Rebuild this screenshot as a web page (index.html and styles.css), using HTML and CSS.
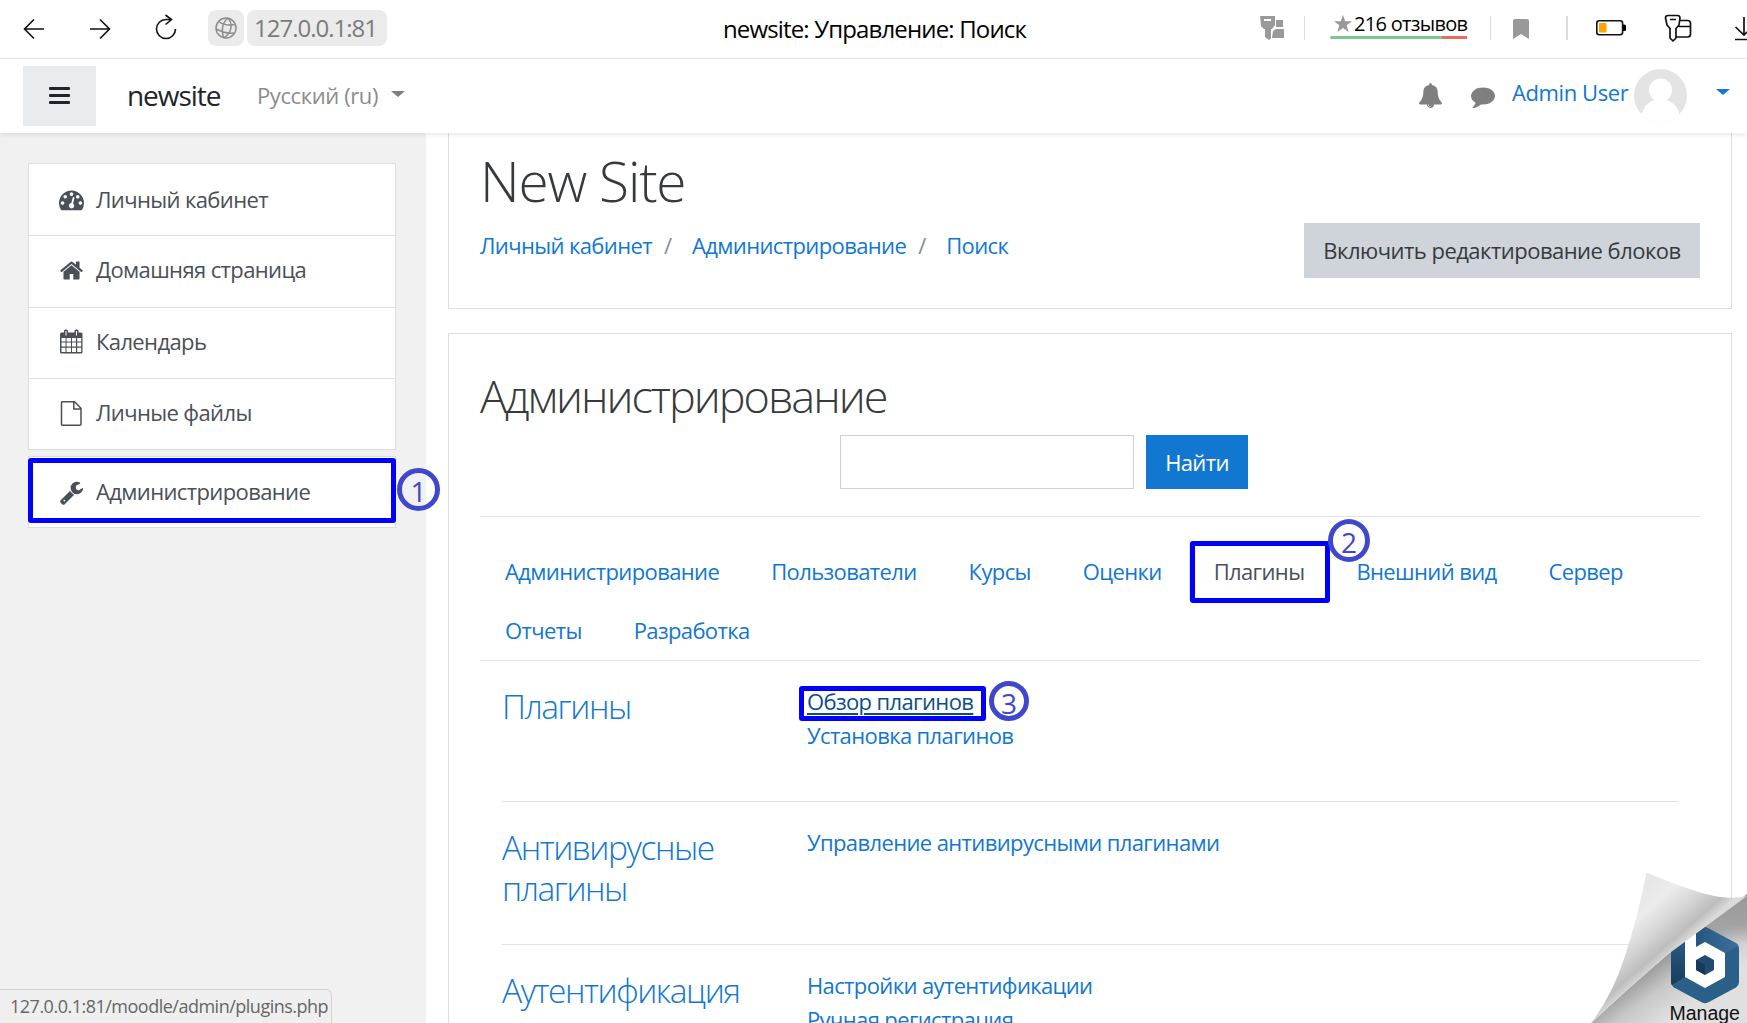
FILE: index.html
```html
<!DOCTYPE html>
<html lang="ru">
<head>
<meta charset="utf-8">
<title>newsite: Управление: Поиск</title>
<link rel="stylesheet" href="styles.css">
</head>
<body>
<header class="browser">
  <div class="browser-nav">
    <svg class="ico-back" width="22" height="22" viewBox="0 0 22 22"><path d="M21 11H1.500M11 1.500L1.500 11l9.500 9.500"/></svg>
    <svg class="ico-fwd" width="22" height="22" viewBox="0 0 22 22"><path d="M1 11h19.500M11 1.500l9.500 9.500-9.500 9.500"/></svg>
    <svg class="ico-reload" width="22" height="26" viewBox="0 0 22 26"><path d="M20.500 15a9.500 9.500 0 1 1-9.500-9.500h5.500M10.500 1l6 4.500-6 5"/></svg>
    <div class="site-ico"><svg width="24" height="24" viewBox="0 0 24 24"><circle cx="12" cy="12" r="10"/><path d="M14 2.200c-6 4-7 14-4 19.600M14 2.200c5 5 4 15-4 19.600M4.500 5.500c5 3.500 11 4.200 16 3M2.500 13c5 3 12 4.500 17.500 4"/></svg></div>
    <div class="url">127.0.0.1:81</div>
  </div>
  <div class="page-title">newsite: Управление: Поиск</div>
  <div class="browser-tools">
    <svg class="t-key" width="25" height="26" viewBox="0 0 25 26"><path fill="#999" fill-rule="evenodd" d="M1 1h15v9l-3 4h-1v9l-2 2-4-3v-8H5l-3-3zM5 4v2h7V4zM17 5h7v7h-7zM14 16l3-2h8v9H13z"/></svg>
    <i class="sep"></i>
    <div class="reviews">
      <div class="reviews-text"><svg width="18" height="18" viewBox="0 0 18 18"><path fill="#999" d="M9 0l2.200 6.300H18l-5.300 4 2 6.700L9 13l-5.700 4 2-6.700L0 6.300h6.800z"/></svg><span>216 отзывов</span></div>
      <div class="reviews-bar"></div>
    </div>
    <i class="sep sep2"></i>
    <svg class="t-mark" width="16" height="20" viewBox="0 0 16 20"><path fill="#999" d="M2 0h12q2 0 2 2v18l-8-5-8 5V2q0-2 2-2z"/></svg>
    <i class="sep sep3"></i>
    <svg class="t-bat" width="31" height="16" viewBox="0 0 31 16"><rect x=".8" y=".8" width="25.800" height="14" rx="2.500" fill="none" stroke="#111" stroke-width="1.600"/><rect x="3" y="3" width="7.500" height="9.500" rx="1" fill="#ffa400"/><path d="M27 4.500h1.500q1.500 0 1.500 1.500v3.500q0 1.500-1.500 1.500H27z"/></svg>
    <svg class="t-pass" width="28" height="28" viewBox="0 0 28 28"><g fill="none" stroke="#111" stroke-width="1.700" stroke-linejoin="round"><path d="M4 1.500h9.500q2.500 0 2.500 2.500l-1 7-3 3.500v9.500l-3 3-3-3V14.500L3 11 1.500 4Q1.500 1.500 4 1.500zM6 5.500h6M16 6.500h7.500q3 0 3 3V20q0 3-3 3H12M15 12.500h11"/></g></svg>
    <svg class="t-down" width="24" height="24" viewBox="0 0 24 24"><path d="M10 0v18M1.500 10l8.500 8 8.500-8M1 22.500h22" fill="none" stroke="#111" stroke-width="1.700"/></svg>
  </div>
</header>

<nav class="topnav">
  <button class="burger"><i></i><i></i><i></i></button>
  <a class="brand">newsite</a>
  <a class="lang">Русский (ru)<i class="caret"></i></a>
  <div class="user">
    <svg class="bell" width="25" height="25" viewBox="0 0 1792 1792"><path d="M912 1696q0-16-16-16-59 0-101.500-42.500t-42.500-101.500q0-16-16-16t-16 16q0 73 51.500 124.500t124.500 51.500q16 0 16-16zm816-288q0 52-38 90t-90 38h-448q0 106-75 181t-181 75-181-75-75-181h-448q-52 0-90-38t-38-90q50-42 91-88t85-119.500 74.500-158.500 50-206 19.500-260q0-152 117-282.500t307-158.500q-8-19-8-39 0-40 28-68t68-28 68 28 28 68q0 20-8 39 190 28 307 158.500t117 282.500q0 139 19.500 260t50 206 74.500 158.500 85 119.500 91 88z"/></svg>
    <svg class="chat" width="24" height="24" viewBox="0 0 1792 1792"><path d="M1792 896q0 174-120 321.500t-326 233-450 85.500q-70 0-145-8-198 175-460 242-49 14-114 22-17 2-30.500-9t-17.500-29v-1q-3-4-.5-12t2-10 4.500-9.500l6-9 7-8.500 8-9q7-8 31-34.500t34.500-38 31-39.500 32.500-51 27-59 26-76q-157-89-247.500-220t-90.500-281q0-130 71-248.500t191-204.500 286-136.500 348-50.500q244 0 450 85.500t326 233 120 321.500z"/></svg>
    <a class="user-name">Admin User</a>
    <svg class="avatar" width="53" height="53" viewBox="0 0 53 53"><defs><clipPath id="av"><circle cx="26.500" cy="26.500" r="26.500"/></clipPath></defs><g clip-path="url(#av)"><path fill="#e4e4e4" d="M0 0h53v53H0z"/><circle cx="26.500" cy="21" r="11.500" fill="#fff"/><path fill="#fff" d="M7 48c1-8 6-15 14-17h11c8 2 13 9 14 17v6H7z"/></g></svg>
    <i class="caret blue"></i>
  </div>
</nav>

<div class="page">
  <aside class="drawer">
    <ul class="menu">
      <li><svg width="25" height="25" viewBox="0 0 1792 1792"><path d="M384 1152q0-53-37.500-90.500t-90.500-37.500-90.500 37.500-37.500 90.500 37.500 90.500 90.500 37.500 90.500-37.500 37.500-90.500zm192-448q0-53-37.500-90.500t-90.500-37.500-90.500 37.500-37.500 90.500 37.500 90.500 90.500 37.500 90.500-37.500 37.500-90.500zm428 481l101-382q6-26-7.500-48.500t-38.500-29.500-48 6.500-30 39.500l-101 382q-60 5-107 43.500t-63 98.500q-20 77 20 146t117 89 146-20 89-117q16-60-6-117t-72-91zm660-33q0-53-37.500-90.500t-90.500-37.500-90.500 37.500-37.500 90.500 37.500 90.500 90.500 37.500 90.500-37.500 37.500-90.500zm-640-640q0-53-37.500-90.500t-90.500-37.500-90.500 37.500-37.500 90.500 37.500 90.500 90.500 37.500 90.500-37.500 37.500-90.500zm448 192q0-53-37.500-90.500t-90.500-37.500-90.500 37.500-37.500 90.500 37.500 90.500 90.500 37.500 90.500-37.500 37.500-90.500zm320 448q0 261-141 483-19 29-54 29h-1402q-35 0-54-29-141-221-141-483 0-182 71-348t191-286 286-191 348-71 348 71 286 191 191 286 71 348z"/></svg><span>Личный кабинет</span></li>
      <li><svg width="25" height="25" viewBox="0 0 1792 1792"><path d="M1472 992v480q0 26-19 45t-45 19h-384v-384h-256v384h-384q-26 0-45-19t-19-45v-480q0-1 .5-3t.5-3l575-474 575 474q1 2 1 6zm223-69l-62 74q-8 9-21 11h-3q-13 0-21-7l-692-577-692 577q-12 8-24 7-13-2-21-11l-62-74q-8-10-7-23.500t11-21.500l719-599q32-26 76-26t76 26l244 204v-195q0-14 9-23t23-9h192q14 0 23 9t9 23v408l219 182q10 8 11 21.500t-7 23.500z"/></svg><span>Домашняя страница</span></li>
      <li><svg width="25" height="25" viewBox="0 0 25 25"><path fill-rule="evenodd" d="M2.500 3.500H5V2q0-1.500 1.500-1.500h1Q9 .5 9 2v1.500h6.500V2q0-1.500 1.500-1.500h1q1.500 0 1.500 1.500v1.500h2.500q1.500 0 1.500 1.500v18q0 1.500-1.500 1.500h-19.500Q1 24.500 1 23V5q0-1.500 1.500-1.500zM6.500 2v4.500h1V2zm10.500 0v4.500h1V2zM2.500 9v3.500h4V9zm5 0v3.500H12V9zM13 9v3.500h4V9zm5.200 0v3.500h4V9zM2.500 13.500v4h4v-4zm5 0v4H12v-4zm5.500 0v4h4v-4zm5.200 0v4h4v-4zM2.500 18.700V23h4v-4.300zm5 0V23H12v-4.300zm5.500 0V23h4v-4.300zm5.200 0V23h4v-4.300z"/></svg><span>Календарь</span></li>
      <li><svg width="25" height="25" viewBox="0 0 25 25"><path d="M3 .8h12.500l6.500 6.500v15.700q0 1.200-1.200 1.200H3.200Q2.500 24.200 2.500 23V2Q2.500.8 3 .8zM14.800 1v7h7" fill="none" stroke="#495057" stroke-width="1.500"/></svg><span>Личные файлы</span></li>
    </ul>
    <ul class="menu menu-admin">
      <li><svg width="25" height="25" viewBox="0 0 1792 1792"><path d="M448 1472q0-26-19-45t-45-19-45 19-19 45 19 45 45 19 45-19 19-45zm644-420l-682 682q-37 37-90 37-52 0-91-37l-106-108q-38-36-38-90 0-53 38-91l681-681q39 98 114.500 173.500t173.500 114.500zm634-435q0 39-23 106-47 134-164.500 217.500t-258.500 83.500q-185 0-316.500-131.500t-131.500-316.500 131.500-316.500 316.500-131.500q58 0 121.500 16.500t107.500 46.500q16 11 16 28t-16 28l-293 169v224l193 107q5-3 79-48.500t135.500-81 70.500-35.500q15 0 23.500 10t8.500 25z"/></svg><span>Администрирование</span></li>
    </ul>
    <div class="frame frame-1"></div>
    <div class="mark mark-1">1</div>
  </aside>

  <main class="content">
    <section class="card head-card">
      <div class="head-left">
        <h1>New Site</h1>
        <div class="crumbs"><a>Личный кабинет</a><b>/</b><a>Администрирование</a><b>/</b><a>Поиск</a></div>
      </div>
      <button class="btn-edit">Включить редактирование блоков</button>
    </section>
    <section class="card main-card">
      <h2>Администрирование</h2>
      <form class="search"><input type="text"><button type="button">Найти</button></form>
      <div class="tabs">
        <a>Администрирование</a><a>Пользователи</a><a>Курсы</a><a>Оценки</a><a class="active">Плагины</a><a>Внешний вид</a><a>Сервер</a><a>Отчеты</a><a>Разработка</a>
        <div class="frame frame-2"></div>
        <div class="mark mark-2">2</div>
      </div>
      <div class="rows">
        <div class="row"><h3>Плагины</h3><div class="links"><a class="hover">Обзор плагинов</a><a>Установка плагинов</a></div>
          <div class="frame frame-3"></div><div class="mark mark-3">3</div></div>
        <div class="row"><h3>Антивирусные плагины</h3><div class="links"><a>Управление антивирусными плагинами</a></div></div>
        <div class="row"><h3>Аутентификация</h3><div class="links"><a>Настройки аутентификации</a><a>Ручная регистрация</a></div></div>
      </div>
    </section>
  </main>
</div>

<div class="status">127.0.0.1:81/moodle/admin/plugins.php</div>

<svg class="corner" width="157" height="151" viewBox="0 0 157 151">
  <defs>
    <linearGradient id="under" gradientUnits="userSpaceOnUse" x1="80" y1="80" x2="112" y2="124"><stop offset="0" stop-color="#999"/><stop offset=".45" stop-color="#c8c8c8"/><stop offset="1" stop-color="#e0e0e0"/></linearGradient>
    <linearGradient id="shade" x1="0" y1="0" x2="0" y2="1"><stop offset="0" stop-color="#989898"/><stop offset=".6" stop-color="#a2a2a2"/><stop offset="1" stop-color="#a2a2a2" stop-opacity="0"/></linearGradient>
    <linearGradient id="flap" gradientUnits="userSpaceOnUse" x1="40" y1="25" x2="86" y2="78"><stop offset="0" stop-color="#e6e6e6"/><stop offset=".3" stop-color="#ececec"/><stop offset=".6" stop-color="#d6d6d6"/><stop offset=".86" stop-color="#bdbdbd"/><stop offset="1" stop-color="#dadada"/></linearGradient>
    <linearGradient id="hexl" x1="0" y1="0" x2="0" y2="1"><stop offset="0" stop-color="#2b5f8a"/><stop offset="1" stop-color="#173c5a"/></linearGradient>
    <linearGradient id="hexr" x1="0" y1="0" x2="1" y2="0"><stop offset="0" stop-color="#245680"/><stop offset="1" stop-color="#3d719b"/></linearGradient>
  </defs>
  <path fill="url(#under)" d="M157 24L77 83 37 118 1 151h156z"/>
  <path fill="url(#shade)" d="M157 22L95 70l62 2z"/>
  <path fill="#2a5f88" d="M112 56.500q3-1.500 6 0l28 15q3 2 3 5v34q0 3-3 5l-28 15q-3 1.500-6 0l-28-15q-3-2-3-5v-34q0-3 3-5z"/>
  <path fill="url(#hexl)" d="M81 76l14-12v41l-13 8q-1-1-1-3z"/>
  <path fill="url(#hexr)" d="M106 56l10-1 30 16q2 1 2.500 3L135 81l-20-11-9 5z"/>
  <path fill="#fff" d="M95 50h11v25l9-5 20 11v24l-20 11-20-11z"/>
  <path fill="#1f4c70" d="M115 83l9 5v10l-9 5-9-5V88z"/><path fill="#163a57" d="M106 88l9 5v10l-9-5z"/>
  <path fill="url(#flap)" d="M56.500.5Q96 17 118 22.500T157 24L77 83 37 118 1 151Q22 124 35 84T56.500.5z"/>
  <text x="79.500" y="147.500" font-family="Liberation Sans, sans-serif" font-size="19.500" letter-spacing="0" fill="#111">Manage</text>
</svg>
</body>
</html>
```
FILE: styles.css
```css
* { box-sizing: border-box; }
body { margin: 0; height: 1023px; overflow: hidden; position: relative; background: #fff; color: #373a3c;
  font: 400 22px/34px "Open Sans", "Noto Sans", sans-serif; letter-spacing: -.62px; display: flex; flex-direction: column; }
svg { display: block; flex: none; }
button { font: inherit; letter-spacing: inherit; border: 0; padding: 0; white-space: nowrap; }
ul { list-style: none; margin: 0; padding: 0; }
h1, h2, h3 { margin: 0; font-weight: 300; }
a { color: #1177d1; white-space: nowrap; }

.browser { height: 59px; flex: none; border-bottom: 1px solid #e9e9e9; display: flex; align-items: flex-start; }
.browser-nav { display: flex; width: 723px; padding-left: 23px; flex: none; }
.browser-nav svg { fill: none; stroke: #111; stroke-width: 1.6; }
.ico-back { margin-top: 18px; }
.ico-fwd { margin: 18px 0 0 44px; }
.ico-reload { margin: 14px 0 0 44px; }
.site-ico { width: 36px; height: 36px; margin: 10px 0 0 31px; border-radius: 8px; background: #ebebeb; display: flex; align-items: center; justify-content: center; }
.browser-nav .site-ico svg { stroke: #8c8c8c; stroke-width: 1.5; }
.url { width: 140px; height: 36px; margin: 10px 0 0 3px; padding-left: 7px; border-radius: 8px; background: #ebebeb; color: #7b7b7b; font-size: 24px; line-height: 36px; letter-spacing: -1px; }
.page-title { color: #000; font-size: 24px; line-height: 57px; letter-spacing: -.85px; width: 536px; flex: none; white-space: nowrap; }
.browser-tools { display: flex; flex: none; }
.t-key { margin-top: 15px; }
.sep { width: 1px; height: 24px; background: #dcdcdc; margin: 16px 0 0 20px; }
.reviews { width: 137px; margin: 12px 0 0 25px; }
.reviews-text { display: flex; height: 24px; padding: 0 0 1px 4px; gap: 2px; align-items: center; color: #000; font-size: 20px; line-height: 22px; letter-spacing: -.7px; white-space: nowrap; }
.reviews-bar { height: 3px; border-radius: 2px 0 0 2px; background: linear-gradient(90deg, #7bc791 112px, #ed6a5a 112px); }
.sep2 { margin-left: 23px; }
.t-mark { margin: 19px 0 0 22px; }
.sep3 { width: 2px; margin-left: 37px; }
.t-bat { margin: 20px 0 0 28px; }
.t-pass { margin: 14px 0 0 37px; }
.t-down { margin: 17px 0 0 42px; }

.topnav { height: 74px; flex: none; display: flex; position: relative; z-index: 1; background: #fff; box-shadow: 0 2px 5px rgba(0,0,0,.09); }
.burger { width: 73px; height: 60px; margin: 6.500px 0 0 23px; background: #e9ecef; display: flex; flex-direction: column; align-items: center; justify-content: center; gap: 4px; }
.burger i { width: 21px; height: 3px; background: #212529; border-radius: 1px; }
.brand { margin-left: 31px; width: 101px; font-size: 28px; line-height: 73px; color: #212529; letter-spacing: -1.050px; }
.lang { line-height: 73px; color: #8c8c8c; margin-left: 29px; display: flex; letter-spacing: -.4px; }
.caret { border: 7px solid transparent; border-top: 6.500px solid #7e7e7e; border-bottom: 0; margin: 32px 0 0 13px; width: 0; height: 0; }
.user { display: flex; margin-left: auto; padding-right: 17px; }
.user svg { fill: #7f7f7f; }
.bell { margin: 24px 0 0; }
.chat { margin: 25px 0 0 28px; }
.user-name { line-height: 67px; margin-left: 17px; width: 118px; letter-spacing: -.4px; }
.avatar { margin: 10px 0 0 4px; }
.caret.blue { border-top-color: #1177d1; margin: 30px 0 0 29px; }

.page { display: flex; height: 890px; }
.drawer { width: 426px; flex: none; background: #f1f1f1; padding: 30px 30px 0 28px; position: relative; }
.menu { background: #fff; border: 1px solid #dedede; color: #495057; width: 368px; }
.menu li { height: 71.300px; padding: 0 0 0 30px; display: flex; align-items: center; gap: 12px; }
.menu li + li { border-top: 1px solid #dedede; padding-bottom: 2px; }
.menu span { padding-bottom: 2px; }
.menu svg { fill: #495057; }
.menu-admin { margin-top: 6px; }
.menu-admin li { height: 70px; }

.frame { position: absolute; border: 5px solid #00f; border-radius: 3px; }
.mark { position: absolute; border: 5px solid #3f48cc; border-radius: 50%; color: #3f48cc; font-size: 28px; letter-spacing: 0; width: 43px; height: 43px; line-height: 37px; text-align: center; }
.frame-1 { left: 28px; top: 325px; width: 368px; height: 65px; }
.mark-1 { left: 397px; top: 335px; z-index: 2; }

.content { padding-left: 22px; width: 1306px; flex: none; }
.card { border: 1px solid #dcdddf; padding: 0 31px; }
.head-card { height: 176px; border-top: 0; display: flex; justify-content: space-between; }
h1 { font-size: 55px; line-height: 60px; padding-top: 18px; letter-spacing: -1.200px; }
.crumbs { display: flex; line-height: 34px; margin-top: 17px; }
.crumbs b { font-weight: 400; color: #868e96; width: 40px; padding-left: 12px; }
.btn-edit { width: 396px; height: 55px; padding-bottom: 1px; margin-top: 90px; background: #ced4da; color: #373a3c; letter-spacing: -.52px; }
.main-card { margin-top: 24px; height: 690px; border-bottom: 0; overflow: hidden; }
h2 { font-size: 45px; line-height: 54px; padding-top: 35px; letter-spacing: -2px; height: 101px; }
.search { display: flex; gap: 12px; padding-left: 360px; height: 82px; border-bottom: 1px solid #dfe1e3; }
.search input { width: 294px; height: 54px; border: 1px solid #ced0d2; background: #fff; }
.search button { width: 102px; height: 54px; padding-bottom: 1px; background: #1177d1; color: #fff; }
.tabs { display: flex; flex-wrap: wrap; align-content: flex-start; height: 144px; padding-top: 24px; border-bottom: 1px solid #dee2e6; position: relative; column-gap: 2px; }
.tabs a { height: 59px; line-height: 58px; padding: 0 24px; border: 1px solid transparent; border-bottom: 0; }
.tabs a.active { color: #495057; border-color: #dee2e6; }
.frame-2 { left: 710px; top: 24px; width: 140px; height: 62px; }
.mark-2 { left: 848px; top: 2px; width: 42px; height: 43px; }
.rows { padding: 0 22px; }
.row { display: flex; height: 141px; padding: 25px 0 0; border-bottom: 1px solid #dfe1e3; position: relative; }
.row + .row { height: 142.500px; }
h3 { font-size: 33.500px; line-height: 41px; width: 305px; padding-right: 40px; color: #1177d1; letter-spacing: -1.450px; flex: none; }
.links { display: flex; flex-direction: column; align-items: flex-start; margin-top: -2px; }
.links .hover { color: #0b4f8a; text-decoration: underline; text-decoration-thickness: 2px; text-underline-offset: 3px; }
.frame-3 { left: 297px; top: 25px; width: 187px; height: 35px; }
.mark-3 { left: 487px; top: 20px; width: 40px; height: 40px; line-height: 34px; }

.status { position: absolute; left: -1px; top: 989px; width: 333px; height: 34px; padding-left: 10px; border: 1px solid #d2d2d2; border-bottom: 0; border-radius: 0 6px 0 0; background: #efefef; color: #666; font-size: 18px; line-height: 33px; letter-spacing: -.5px; white-space: nowrap; z-index: 2; }
.corner { position: absolute; left: 1590px; top: 872px; z-index: 2; }
```
